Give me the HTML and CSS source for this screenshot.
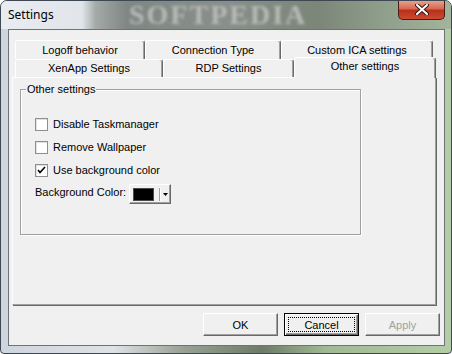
FILE: index.html
```html
<!DOCTYPE html>
<html lang="en">
<head>
    <meta charset="UTF-8">
    <title>Settings</title>
    <link rel="stylesheet" href="styles.css">
</head>
<body>
    <div class="window">
        <div class="titlebar">
            <span class="title">Settings</span>
            <span class="watermark">SOFTPEDIA</span>
            <div class="close">
                <svg width="14" height="11" viewBox="0 0 14 11">
                    <path d="M2 1 L12 10 M12 1 L2 10" stroke="#3a1510" stroke-width="4" stroke-linecap="round"/>
                    <path d="M2 1 L12 10 M12 1 L2 10" stroke="#fff" stroke-width="2" stroke-linecap="round"/>
                </svg>
            </div>
        </div>
        <div class="client">
            <div class="tabs">
                <div class="tab-row">
                    <div class="tab w-logoff">Logoff behavior</div>
                    <div class="tab w-conn">Connection Type</div>
                    <div class="tab w-ica">Custom ICA settings</div>
                </div>
                <div class="tab-row front">
                    <div class="tab w-xen">XenApp Settings</div>
                    <div class="tab w-rdp">RDP Settings</div>
                    <div class="tab active w-other">Other settings</div>
                </div>
            </div>
            <div class="panel">
                <div class="group">
                    <span class="group-label">Other settings</span>
                    <div class="check"><span class="box"></span>Disable Taskmanager</div>
                    <div class="check"><span class="box"></span>Remove Wallpaper</div>
                    <div class="check">
                        <span class="box">
                            <svg width="11" height="11" viewBox="0 0 11 11">
                                <path d="M2 5 L4 7.5 L9 2" fill="none" stroke="#000" stroke-width="1.6"/>
                            </svg>
                        </span>Use background color
                    </div>
                    <div class="color-row">
                        <span class="color-label">Background Color:</span>
                        <div class="color-btn">
                            <span class="swatch"></span>
                            <span class="sep"></span>
                            <svg class="arrow" width="5" height="3" viewBox="0 0 5 3">
                                <path d="M0 0 H5 L2.5 3 Z" fill="#000"/>
                            </svg>
                        </div>
                    </div>
                </div>
            </div>
            <div class="buttons">
                <div class="btn">OK</div>
                <div class="btn default"><span class="focus">Cancel</span></div>
                <div class="btn disabled">Apply</div>
            </div>
        </div>
    </div>
</body>
</html>
```
FILE: styles.css
```css
* {
    box-sizing: border-box;
}
body {
    margin: 0;
    font-family: "Liberation Sans", Arial, sans-serif;
    font-size: 11px;
    color: #000;
    background: #fff;
}

.window {
    width: 452px;
    height: 354px;
    border: 1px solid #3d4852;
    border-radius: 7px 7px 4px 4px;
    padding: 0 6px 7px 7px;
    display: flex;
    flex-direction: column;
    overflow: hidden;
    background: linear-gradient(to right, #cfd5dd 0, #dfe2e6 25%, #9aa396 40%, #6f7b69 58%, #9fb992 72%, #b3cda6 100%);
}

/* title bar with the blurred glass look */
.titlebar {
    height: 28px;
    margin: 0 -6px 0 -7px;
    padding: 0 6px 0 7px;
    display: flex;
    align-items: flex-start;
    position: relative;
    background: linear-gradient(to right, #e9ecf0 0, #e1e5ea 18%, #a4aaa8 21%, #7f8683 28%, #898f8b 50%, #7b8578 70%, #91a08d 86%, #a3b49d 100%);
}
.title {
    font-family: "Noto Sans", "Open Sans", sans-serif;
    font-size: 12px;
    line-height: 28px;
    color: #000;
}
.watermark {
    position: absolute;
    left: 128px;
    top: 0;
    font-family: "Liberation Serif", serif;
    font-weight: bold;
    font-size: 28px;
    line-height: 28px;
    letter-spacing: 2px;
    color: #b7bbb7;
    filter: blur(1.4px);
}
.close {
    margin-left: auto;
    margin-top: -1px;
    width: 47px;
    height: 20px;
    border: 1px solid #4c1b14;
    border-top: none;
    border-radius: 0 0 5px 5px;
    background: linear-gradient(#e9a796, #d66a52 45%, #b9301c 55%, #cc4a30);
    display: flex;
    align-items: center;
    justify-content: center;
    position: relative;
}

.client {
    flex: 1;
    border: 1px solid #6d7378;
    background: #f0f0f0;
    padding-top: 10px;
    display: flex;
    flex-direction: column;
}

/* tab strip, two rows */
.tabs {
    margin-left: 6px;
}
.tab-row {
    display: flex;
    height: 19px;
}
.tab-row.front {
    height: 18px;
}
.tab {
    height: 19px;
    line-height: 18px;
    text-align: center;
    white-space: nowrap;
    background: #f0f0f0;
    border-top: 1px solid #fff;
    border-left: 1px solid #fff;
    border-right: 1px solid #696969;
    box-shadow: inset -1px 0 0 #a0a0a0;
    border-radius: 3px 3px 0 0;
}
.front .tab {
    height: 18px;
    line-height: 17px;
}
.front .tab.active {
    height: 21px;
    margin-top: -2px;
    position: relative;
    z-index: 1;
}
.w-logoff { width: 130px; }
.w-conn { width: 136px; }
.w-ica { width: 152px; }
.w-xen { width: 148px; }
.w-rdp { width: 131px; }
.w-other { width: 142px; }

.panel {
    margin-left: 3px;
    width: 424px;
    height: 228px;
    border-top: 1px solid #fff;
    border-left: 1px solid #fff;
    border-right: 1px solid #a0a0a0;
    border-bottom: 1px solid #a0a0a0;
    box-shadow: 1px 1px 0 #696969;
}

.group {
    position: relative;
    margin: 11px 0 0 7px;
    width: 341px;
    height: 146px;
    border: 1px solid #a0a0a0;
    box-shadow: inset 1px 1px 0 #fff, 1px 1px 0 #fff;
    padding: 28px 0 0 14px;
}
.group-label {
    position: absolute;
    left: 5px;
    top: -7px;
    padding: 0 1px;
    line-height: 13px;
    background: #f0f0f0;
}

.check {
    display: flex;
    align-items: center;
    height: 13px;
    line-height: 13px;
    margin-bottom: 10px;
}
.box {
    width: 13px;
    height: 13px;
    margin-right: 5px;
    border: 1px solid #8f8f8f;
    background: #fff;
    box-shadow: inset 1px 1px 0 #e2e2e2;
    display: flex;
    align-items: center;
    justify-content: center;
}

.color-row {
    display: flex;
    align-items: flex-start;
    margin-top: -3px;
    height: 20px;
}
.color-label {
    width: 94px;
    padding-top: 2px;
    line-height: 13px;
}
.color-btn {
    width: 42px;
    height: 20px;
    padding-left: 3px;
    display: flex;
    align-items: center;
    border-top: 1px solid #fff;
    border-left: 1px solid #fff;
    border-right: 1px solid #696969;
    border-bottom: 1px solid #696969;
    box-shadow: inset -1px -1px 0 #a0a0a0;
}
.swatch {
    width: 21px;
    height: 13px;
    background: #000;
    border: 1px solid #4a4a4a;
}
.sep {
    width: 2px;
    height: 13px;
    margin-left: 5px;
    border-left: 1px solid #a0a0a0;
    border-right: 1px solid #fff;
}
.arrow {
    margin-left: 2px;
}

.buttons {
    display: flex;
    justify-content: flex-end;
    gap: 6px;
    margin-top: 8px;
    padding-right: 4px;
}
.btn {
    width: 75px;
    height: 23px;
    display: flex;
    align-items: center;
    justify-content: center;
    border-top: 1px solid #fff;
    border-left: 1px solid #fff;
    border-right: 1px solid #696969;
    border-bottom: 1px solid #696969;
    box-shadow: inset -1px -1px 0 #a0a0a0;
}
.btn.default {
    border: 1px solid #000;
    padding: 3px;
    box-shadow: inset 1px 1px 0 #fff, inset -1px -1px 0 #696969, inset -2px -2px 0 #a0a0a0;
}
.focus {
    flex: 1;
    align-self: stretch;
    display: flex;
    align-items: center;
    justify-content: center;
    border: 1px dotted #000;
}
.btn.disabled {
    color: #a0a0a0;
}
```
